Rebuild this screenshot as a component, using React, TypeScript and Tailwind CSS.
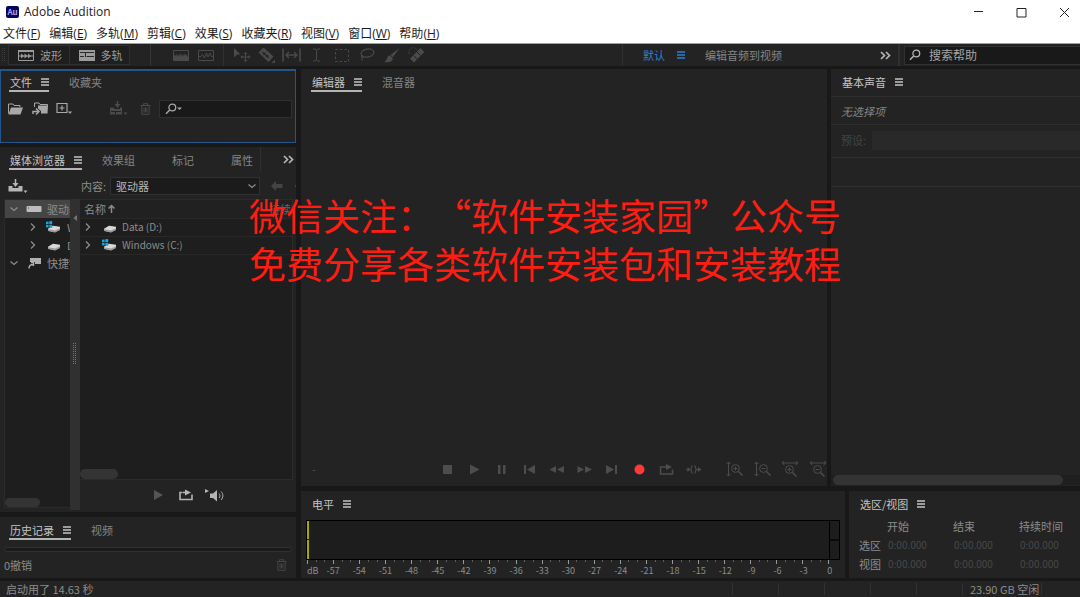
import React, { useState } from 'react';

type IconProps = { w: number; h: number; children: React.ReactNode; className?: string };

const Icon: React.FC<IconProps> = ({ w, h, children, className = '' }) => (
  <svg width={w} height={h} viewBox={`0 0 ${w} ${h}`} fill="none" className={`shrink-0 ${className}`} aria-hidden="true">
    {children}
  </svg>
);

const MenuLines = () => (
  <Icon w={8} h={8}>
    <path d="M0 1h8M0 4h8M0 7h8" stroke="currentColor" strokeWidth="1.3" />
  </Icon>
);

const DoubleChevron = () => (
  <Icon w={11} h={9}>
    <path d="M1 1l3.5 3.5L1 8M6 1l3.5 3.5L6 8" stroke="currentColor" strokeWidth="1.7" />
  </Icon>
);

const ChevronDown = () => (
  <Icon w={8} h={8}>
    <path d="M0.5 2.5l3.5 3 3.5-3" stroke="currentColor" strokeWidth="1.3" />
  </Icon>
);

const ChevronRight = () => (
  <Icon w={8} h={8}>
    <path d="M2 0.5l3.5 3.5L2 7.5" stroke="currentColor" strokeWidth="1.3" />
  </Icon>
);

const Trash = () => (
  <Icon w={11} h={12}>
    <path d="M0.5 2.5h10M3.5 2V0.7h4V2M1.8 2.5v8.8h7.4V2.5M4 4.5v5M5.5 4.5v5M7 4.5v5" stroke="currentColor" />
  </Icon>
);

const Loop = () => (
  <Icon w={14} h={12}>
    <path d="M3.5 3.5H1v7h12V5.5" stroke="currentColor" strokeWidth="1.6" />
    <path d="M4 3.5h4" stroke="currentColor" strokeWidth="1.6" />
    <path d="M6 0.5l6 3-6 3z" fill="currentColor" />
  </Icon>
);

const Search = () => (
  <Icon w={12} h={12}>
    <circle cx="7.3" cy="4.5" r="3.4" stroke="currentColor" strokeWidth="1.3" />
    <path d="M4.7 7L1 10.8" stroke="currentColor" strokeWidth="1.5" />
  </Icon>
);

const Disk: React.FC<{ windows?: boolean }> = ({ windows = false }) => (
  <Icon w={16} h={12}>
    <path d="M2 7.8L7 4.8l7 1v3L9 11.3l-7-1.5z" fill="#d9d9d9" />
    <path d="M2 8.3l7 1.2 5-2.2v1.8L9 11.5 2 10z" fill="#9a9a9a" />
    {windows && <path d="M0 0.8l2.6-.4v2.8H0zM3.3.3L6.2 0v3.2H3.3zM0 3.9h2.6v2.7L0 6.3zM3.3 3.9h2.9V7l-2.9-.4z" fill="#12a9e0" />}
  </Icon>
);

const DriveBox = () => (
  <Icon w={16} h={8}>
    <rect x="0.5" y="1" width="15" height="6" rx="1" fill="#bdbdbd" />
    <path d="M2 3h1" stroke="#444" />
  </Icon>
);

const Shortcut = () => (
  <Icon w={14} h={12}>
    <path d="M2 1h11v6H7V5H2z" fill="#b0b0b0" />
    <path d="M1 11.5c0-3 1-4 4-4M3 5.5h2.5V9" stroke="#b0b0b0" strokeWidth="1.4" />
  </Icon>
);

const Panel: React.FC<{ className?: string; label: string; children: React.ReactNode }> = ({ className = '', label, children }) => (
  <section aria-label={label} className={`flex flex-col overflow-hidden bg-[#232323] ${className}`}>
    {children}
  </section>
);

const PanelTabs: React.FC<{ tabs: string[]; plain?: boolean; children?: React.ReactNode }> = ({ tabs, plain = false, children }) => {
  const [active, setActive] = useState(tabs[0]);
  return (
    <div className="flex h-[23px] shrink-0 gap-5 pl-[9px]">
      {tabs.map((tab) => (
        <button
          key={tab}
          onClick={() => setActive(tab)}
          className={`flex shrink-0 items-center border-b-2 pt-[5px] leading-4 ${
            tab === active ? 'gap-[9px] pl-px text-[#c4c4c4]' : 'pr-[17px] text-[#858585]'
          } ${tab === active && !plain ? 'border-[#b4b4b4]' : 'border-transparent'}`}
        >
          {tab}
          {tab === active && <MenuLines />}
        </button>
      ))}
      {children}
    </div>
  );
};

const menus = [
  ['文件', 'F'],
  ['编辑', 'E'],
  ['多轨', 'M'],
  ['剪辑', 'C'],
  ['效果', 'S'],
  ['收藏夹', 'R'],
  ['视图', 'V'],
  ['窗口', 'W'],
  ['帮助', 'H'],
];

const TitleBar = () => (
  <header className="h-[44px] shrink-0 border-b border-[#9aa3a3] bg-white text-[#1c1c1c]">
    <div className="flex h-6 items-center">
      <div className="ml-[6px] flex h-3 w-[13px] items-center justify-center rounded-xs bg-[#05055c] text-[8px] font-bold leading-3 text-[#a5a5ff]">
        Au
      </div>
      <h1 className="ml-[5px] font-['Open_Sans','Noto_Sans_CJK_SC',sans-serif] text-[12px] leading-4">Adobe Audition</h1>
      <div className="ml-auto flex gap-8 pr-[10px]">
        <button aria-label="最小化">
          <Icon w={11} h={11}><path d="M1 4.5h9" stroke="#222" /></Icon>
        </button>
        <button aria-label="最大化">
          <Icon w={11} h={11}><path d="M1 1.5h9v8.5H1z" stroke="#222" /></Icon>
        </button>
        <button aria-label="关闭">
          <Icon w={11} h={11}><path d="M1 1l9 9M10 1l-9 9" stroke="#222" /></Icon>
        </button>
      </div>
    </div>
    <nav className="flex gap-[9px] pl-[3px] pt-[2px] font-['Open_Sans','Noto_Sans_CJK_SC',sans-serif] text-[12px] leading-4">
      {menus.map(([name, key]) => (
        <button key={key} className="whitespace-nowrap">
          {name}(<u>{key}</u>)
        </button>
      ))}
    </nav>
  </header>
);

const tools = [
  {
    name: '移动',
    icon: (
      <Icon w={18} h={14}>
        <path d="M1 0l6.5 6.5H4.2L1 9.5z" fill="currentColor" />
        <path d="M12.5 5v8M8.5 9h8" stroke="currentColor" />
        <path d="M12.5 4l2 2h-4zM12.5 14l2-2h-4zM7.5 9l2-2v4zM17.5 9l-2-2v4z" fill="currentColor" />
      </Icon>
    ),
  },
  {
    name: '切断',
    icon: (
      <Icon w={17} h={16}>
        <path d="M0.5 5.5L5.5 0.5l10 9-5 5.5z" fill="currentColor" />
        <path d="M4.5 5l6.5 6M7.5 5.5L5.5 8M10 8L8 10" stroke="#232323" strokeWidth="1.2" />
        <path d="M17 12.5V16h-3.5z" fill="currentColor" />
      </Icon>
    ),
  },
  {
    name: '滑动',
    icon: (
      <Icon w={19} h={14}>
        <path d="M1 0.5v13M18 0.5v13" stroke="currentColor" strokeWidth="1.6" />
        <path d="M4 7h11M7 4L4 7l3 3M12 4l3 3-3 3" stroke="currentColor" strokeWidth="1.4" />
      </Icon>
    ),
  },
  {
    name: '时间选择',
    icon: (
      <Icon w={9} h={14}>
        <path d="M1 1h2l1.5 1L6 1h2M4.5 2v10M1 13h2l1.5-1L6 13h2" stroke="currentColor" />
      </Icon>
    ),
  },
  {
    name: '框选',
    icon: (
      <Icon w={14} h={13}>
        <rect x="0.5" y="0.5" width="13" height="12" stroke="currentColor" strokeDasharray="2.5 2" />
      </Icon>
    ),
  },
  {
    name: '套索',
    icon: (
      <Icon w={16} h={14}>
        <ellipse cx="8.5" cy="5" rx="6.5" ry="4" stroke="currentColor" strokeWidth="1.2" transform="rotate(-12 8.5 5)" />
        <path d="M3.5 7.5c-2 1-1 3 .5 2.3s0-3-1-1.5 0 3 .5 4.500" stroke="currentColor" />
      </Icon>
    ),
  },
  {
    name: '画笔',
    icon: (
      <Icon w={16} h={15}>
        <path d="M15.5 0L6.5 7l2.300 2.300z" fill="currentColor" />
        <path d="M6 7.500c-3.500 0-2 4.500-6 6.500 4 1 9 0 8.800-4z" fill="currentColor" />
      </Icon>
    ),
  },
  {
    name: '修复',
    icon: (
      <Icon w={17} h={16}>
        <path d="M4 13.500L14.500 3" stroke="currentColor" strokeWidth="5.500" />
        <path d="M5.500 8.500l3.500 3.500M9 5l3.500 3.500" stroke="#232323" />
        <path d="M1 6.500C0 3 2.500 0.500 5.500 0.800 7.500 1 8.500 2 9 3" stroke="currentColor" strokeDasharray="1.500 1.500" />
      </Icon>
    ),
  },
];

const Toolbar = () => (
  <div className="flex h-[22px] shrink-0 items-center overflow-hidden bg-[#232323] text-[#9b9b9b]">
    <Icon w={8} h={14} className="text-[#3c3c3c]">
      <path d="M2.500 0v14M4.500 0v14" stroke="currentColor" strokeDasharray="1 1" />
    </Icon>
    <div className="flex h-5 w-[122px] divide-x divide-[#303030] border border-[#303030] bg-[#1f1f1f]">
      <button className="flex flex-1 items-center gap-[6px] pl-[9px] leading-4">
        <Icon w={16} h={11}>
          <path d="M0.500 0.500h15v10H0.500z" stroke="currentColor" />
          <path d="M0 1h16" stroke="currentColor" strokeWidth="2" />
          <path d="M1 6h14" stroke="currentColor" />
          <path d="M3 3.500L6 6 3 8.500zM6.500 3.500l3 2.500-3 2.500zM10 3.500L13 6l-3 2.500z" fill="currentColor" />
        </Icon>
        波形
      </button>
      <button className="flex flex-1 items-center gap-[6px] pl-[9px] leading-4">
        <Icon w={16} h={11}>
          <path d="M0 0h16v11H0z" fill="currentColor" />
          <path d="M1 2.500h14M7.500 6.500H15M1 6.500h4M6.500 3v4" stroke="#2a2a2a" />
        </Icon>
        多轨
      </button>
    </div>
    <span className="ml-5 h-full w-px bg-[#363636]" />
    <div className="ml-[17px] flex w-[50px] text-[#4a4a4a]">
      <button aria-label="频谱频率" className="flex w-[25px] justify-center">
        <Icon w={16} h={11}>
          <path d="M0.500 0.500h15v10H0.500z" stroke="currentColor" />
          <path d="M1 10V6l1-2 1 3 1-4 1 4 1-3 1 2 1-3 1 4 1-3 1 2 1-3 1 3 1-2 1 4v2z" fill="currentColor" />
        </Icon>
      </button>
      <button aria-label="频谱音调" className="flex w-[25px] justify-center">
        <Icon w={16} h={11}>
          <path d="M0.500 0.500h15v10H0.500z" stroke="currentColor" />
          <path d="M1 6.500h2l1.500-2 2 3.500 2-5 1.500 4 2-4 1.500 3.500H15" stroke="currentColor" />
        </Icon>
      </button>
    </div>
    <span className="ml-[5px] mr-[5px] h-full w-px bg-[#303030]" />
    <div className="flex text-[#4a4a4a]">
      {tools.map((tool) => (
        <button key={tool.name} aria-label={tool.name} className="flex w-[25px] items-center justify-center">
          {tool.icon}
        </button>
      ))}
    </div>
    <div className="ml-auto flex h-full w-[458px] items-center border-l border-[#303030]">
      <button className="ml-5 flex items-center gap-3 leading-4 text-[#2f7fd0]">
        默认
        <MenuLines />
      </button>
      <button className="ml-5 leading-4 text-[#858585]">编辑音频到视频</button>
      <button aria-label="更多工作区" className="ml-auto mr-[6px] text-[#b5b5b5]">
        <DoubleChevron />
      </button>
      <label className="ml-px flex h-full w-[182px] items-center border-l-2 border-[#303030] pl-1">
        <span className="flex h-[19px] w-full items-center gap-2 border border-r-0 border-[#303030] bg-[#191919] pl-1 text-[#b5b5b5]">
          <Search />
          <input aria-label="搜索帮助" placeholder="搜索帮助" className="w-full bg-transparent text-[12px] leading-4 outline-none placeholder:text-[#a5a5a5]" />
        </span>
      </label>
    </div>
  </div>
);

const FilesPanel = () => (
  <Panel label="文件" className="h-[74px] shrink-0 border border-t-2 border-[#24558c]">
    <div className="-mt-[2px] -ml-px">
      <PanelTabs tabs={['文件', '收藏夹']} />
    </div>
    <div className="mt-[7px] flex h-[19px] items-center pl-[7px] pr-[3px] text-[#a8a8a8]">
      <button aria-label="打开文件">
        <Icon w={15} h={12}>
          <path d="M0.500 10.500V1h4.500l1 1.500h6V4" stroke="currentColor" />
          <path d="M3 4.500h12l-2.500 7H0.500z" fill="currentColor" />
        </Icon>
      </button>
      <button aria-label="导入文件" className="ml-[9px]">
        <Icon w={16} h={13}>
          <path d="M2.500 5V1H7l1 1.500h7.500V4" stroke="currentColor" />
          <path d="M6 3.500h10l-.5 8H9V9L6 6.500z" fill="currentColor" />
          <path d="M1 12V9.500h5M4 6.500l3 3-3 3" stroke="currentColor" strokeWidth="1.500" />
        </Icon>
      </button>
      <button aria-label="新建文件" className="ml-[8px]">
        <Icon w={17} h={13}>
          <path d="M1 1.500h10v9H1zM6 3.500v5M3.500 6h5" stroke="currentColor" strokeWidth="1.200" />
          <path d="M12 9.500h4l-2 2.500z" fill="currentColor" />
        </Icon>
      </button>
      <button aria-label="插入到多轨混音中" className="ml-9 text-[#4a4a4a]">
        <Icon w={19} h={15}>
          <path d="M1 6.500h4V8h6V6.500h2v7H1z" fill="currentColor" />
          <path d="M2 10.500h10M6.500 10v3" stroke="#232323" />
          <path d="M8.500 0v4" stroke="currentColor" strokeWidth="1.500" />
          <path d="M5.500 3h6l-3 4z" fill="currentColor" />
          <path d="M14.500 11.500h4l-2 2.500z" fill="currentColor" />
        </Icon>
      </button>
      <button aria-label="删除" className="ml-3 text-[#4a4a4a]">
        <Trash />
      </button>
      <label className="ml-2 flex h-[18px] flex-1 items-center border border-[#303030] bg-[#191919] pl-[5px]">
        <Search />
        <Icon w={5} h={4}><path d="M0 0.500h5L2.500 3z" fill="currentColor" /></Icon>
        <input aria-label="筛选文件" className="w-full bg-transparent leading-4 outline-none" />
      </label>
    </div>
  </Panel>
);

const drives = [
  { name: 'Data (D:)', windows: false },
  { name: 'Windows (C:)', windows: true },
];

const MediaBrowser = () => (
  <Panel label="媒体浏览器" className="min-h-0 flex-1">
    <PanelTabs tabs={['媒体浏览器', '效果组', '标记', '属性']}>
      <button aria-label="更多面板" className="-ml-[30px] flex h-6 shrink-0 items-center border-l border-[#303030] pl-[22px] text-[#b5b5b5]">
        <DoubleChevron />
      </button>
    </PanelTabs>
    <div className="mt-[6px] flex h-5 shrink-0 items-center overflow-hidden pl-2 text-[#8c8c8c]">
      <button aria-label="导入" className="text-[#b5b5b5]">
        <Icon w={20} h={14}>
          <path d="M0.500 7h4v2h6V7h4v5.500H0.500z" fill="currentColor" />
          <path d="M7.500 0v5" stroke="currentColor" strokeWidth="1.500" />
          <path d="M4.500 4h6l-3 4z" fill="currentColor" />
          <path d="M15.500 11.500h4l-2 2.500z" fill="currentColor" />
        </Icon>
      </button>
      <label htmlFor="content" className="ml-[53px] whitespace-nowrap leading-4">内容:</label>
      <div className="relative ml-[4px] w-[150px] shrink-0">
        <select id="content" className="h-[18px] w-full appearance-none border border-[#303030] bg-[#1b1b1b] pl-[5px] leading-4 text-[#b5b5b5]">
          <option>驱动器</option>
        </select>
        <span className="pointer-events-none absolute right-1 top-[5px]"><ChevronDown /></span>
      </div>
      <button aria-label="后退" className="ml-[11px] shrink-0 text-[#444]">
        <Icon w={12} h={10}><path d="M0 5l5-5v3h6.500v4H5v3z" fill="currentColor" /></Icon>
      </button>
      <Icon w={4} h={4} className="ml-3 text-[#444]"><path d="M0 1h2v2H0z" fill="currentColor" /></Icon>
    </div>
    <div className="mt-[3px] flex min-h-0 flex-1 pb-[2px] pl-1 pr-[3px] text-[#8c8c8c]">
      <div className="mb-[2px] flex w-[66px] flex-col overflow-hidden border border-r-0 border-[#2b2b2b] bg-[#1e1e1e]">
        <ul className="whitespace-nowrap">
          <li className="flex h-[18px] items-center bg-[#454545] pl-[5px]">
            <ChevronDown />
            <span className="ml-2"><DriveBox /></span>
            <span className="ml-[5px] leading-4">驱动器</span>
          </li>
          {['Windows (C:)', 'Data (D:)'].map((name) => (
            <li key={name} className="flex h-[18px] items-center pl-6">
              <ChevronRight />
              <span className="ml-[9px]"><Disk windows={name.startsWith('W')} /></span>
              <span className="ml-[5px] leading-4">{name}</span>
            </li>
          ))}
          <li className="flex h-[18px] items-center pl-[5px]">
            <ChevronDown />
            <span className="ml-[10px]"><Shortcut /></span>
            <span className="ml-[5px] leading-4">快捷键</span>
          </li>
        </ul>
        <div className="mt-auto h-[9px] w-[35px] rounded-full bg-[#343434]" />
      </div>
      <div className="flex w-[10px] flex-col items-center bg-[#303030] text-[#777]">
        <Icon w={4} h={6} className="mt-4"><path d="M4 0v6L0.500 3z" fill="currentColor" /></Icon>
        <Icon w={4} h={22} className="mt-[122px]">
          <path d="M0.500 0v22M2.500 0v22" stroke="currentColor" strokeDasharray="1 1" />
        </Icon>
      </div>
      <div className="flex min-w-0 flex-1 flex-col">
        <div className="flex min-h-0 flex-1 flex-col border-b border-r border-t border-[#2b2b2b] bg-[#1e1e1e]">
          <table className="w-full table-fixed border-collapse">
            <thead>
              <tr className="h-[18px] border-b border-[#282828] bg-[#212121] text-left leading-4">
                <th className="p-0 pl-1 font-normal">
                  <span className="flex items-center gap-px">
                    名称
                    <Icon w={9} h={9}><path d="M4.500 9V1.500M1.500 4.500l3-3 3 3" stroke="currentColor" strokeWidth="1.500" /></Icon>
                  </span>
                </th>
                <th className="w-[23px] overflow-hidden whitespace-nowrap p-0 font-normal text-[#666]">持续时间</th>
              </tr>
            </thead>
            <tbody>
              {drives.map((drive) => (
                <tr key={drive.name} className="h-[18px] border-b border-[#282828]">
                  <td className="p-0 pl-1" colSpan={2}>
                    <span className="flex items-center leading-4">
                      <ChevronRight />
                      <span className="ml-[10px]"><Disk windows={drive.windows} /></span>
                      <span className="ml-1 text-[10px]">{drive.name}</span>
                    </span>
                  </td>
                </tr>
              ))}
            </tbody>
          </table>
          <div className="mt-auto h-[10px] w-[38px] rounded-full bg-[#343434]" />
        </div>
        <div className="flex h-[30px] shrink-0 items-center gap-4 pl-[74px] text-[#b5b5b5]">
          <button aria-label="播放预览" className="text-[#555]">
            <Icon w={9} h={10}><path d="M0 0l9 5-9 5z" fill="currentColor" /></Icon>
          </button>
          <button aria-label="循环"><Loop /></button>
          <button aria-label="自动播放" className="-ml-1">
            <Icon w={20} h={13}>
              <path d="M0 0l4 2-4 2zM5 4.500h3L12 1v11.500L8 9H5z" fill="currentColor" />
              <path d="M14 4.500c1.300 1.300 1.300 3.200 0 4.500M16 2.500c2.500 2.500 2.500 6 0 8.500" stroke="currentColor" />
            </Icon>
          </button>
        </div>
      </div>
    </div>
  </Panel>
);

const HistoryPanel = () => (
  <Panel label="历史记录" className="h-[61px] shrink-0">
    <PanelTabs tabs={['历史记录', '视频']} />
    <div className="ml-1 mr-1 mt-[7px] h-[5px] rounded-xs border border-[#303030] bg-[#1b1b1b]" />
    <div className="flex flex-1 items-center justify-between pl-1 pr-[9px] text-[#8c8c8c]">
      <span className="leading-4">0撤销</span>
      <button aria-label="删除历史" className="text-[#444]"><Trash /></button>
    </div>
  </Panel>
);

const transport = [
  { name: '停止', icon: <path d="M2 2h9v9H2z" fill="currentColor" /> },
  { name: '播放', icon: <path d="M2 1.500l9.500 5L2 11.500z" fill="currentColor" /> },
  { name: '暂停', icon: <path d="M3 2h2.500v9H3zM8 2h2.500v9H8z" fill="currentColor" /> },
  { name: '移到上一个', icon: <path d="M1 2h2v9H1zM12 2v9L4 6.500z" fill="currentColor" /> },
  { name: '快退', icon: <path d="M6 3v7L-0.500 6.500zM14 3v7L7 6.500z" fill="currentColor" /> },
  { name: '快进', icon: <path d="M-0.500 3v7L6 6.500zM7 3v7l7-3.500z" fill="currentColor" /> },
  { name: '移到下一个', icon: <path d="M1 2v9l8-4.500zM10 2h2v9h-2z" fill="currentColor" /> },
  { name: '录制', icon: <circle cx="6.500" cy="6.500" r="5" fill="#fb3a3a" /> },
  {
    name: '循环播放',
    icon: (
      <>
        <path d="M3 4H0.500v7h12V6.500M3 4h5" stroke="currentColor" strokeWidth="1.500" />
        <path d="M6 1l6 3-6 3z" fill="currentColor" />
      </>
    ),
  },
  {
    name: '跳过所选项目',
    icon: (
      <>
        <path d="M-1 6.500h4M9 6.500h4M5.500 2.500C4 3 5 6 3.500 6.500 5 7 4 10 5.500 10.500M7.500 2.500C9 3 8 6 9.500 6.500 8 7 9 10 7.500 10.500" stroke="currentColor" strokeWidth="1.200" />
        <path d="M0.500 4v5l3-2.500zM11 4v5l3.500-2.500z" fill="currentColor" />
      </>
    ),
  },
];

const zooms = [
  { name: '放大振幅', vertical: true, plus: true },
  { name: '缩小振幅', vertical: true, plus: false },
  { name: '放大时间', vertical: false, plus: true },
  { name: '缩小时间', vertical: false, plus: false },
];

const Editor = () => (
  <Panel label="编辑器" className="min-w-0 flex-1 pl-px">
    <PanelTabs tabs={['编辑器', '混音器']} />
    <div className="flex-1" />
    <div className="flex h-[34px] shrink-0 items-center text-[#4d4d4d]">
      <span className="ml-[10px] leading-4">-</span>
      <div className="ml-auto flex w-[267px] justify-between">
        {transport.map((item) => (
          <button key={item.name} aria-label={item.name} className="flex w-5 justify-center">
            <svg width="13" height="13" viewBox="0 0 13 13" fill="none" className="overflow-visible" aria-hidden="true">
              {item.icon}
            </svg>
          </button>
        ))}
      </div>
      <div className="ml-[22px] flex w-[101px] justify-between">
        {zooms.map((zoom) => (
          <button key={zoom.name} aria-label={zoom.name} className="flex w-[18px] justify-center">
            <Icon w={18} h={16}>
              {zoom.vertical ? (
                <path d="M2.500 1v14M0.500 3l2-2 2 2M0.500 13l2 2 2-2" stroke="currentColor" />
              ) : (
                <path d="M1 2h16M3.500 0L1 2l2.500 2M14.500 0L17 2l-2.500 2" stroke="currentColor" />
              )}
              <g transform={zoom.vertical ? 'translate(5 3)' : 'translate(4 4)'}>
                <circle cx="4.500" cy="4.500" r="3.900" stroke="currentColor" />
                <path d="M7.500 7.500l4 4" stroke="currentColor" strokeWidth="1.500" />
                <path d="M2.500 4.500h4" stroke="currentColor" />
                {zoom.plus && <path d="M4.500 2.500v4" stroke="currentColor" />}
              </g>
            </Icon>
          </button>
        ))}
      </div>
    </div>
  </Panel>
);

const EssentialSound = () => (
  <Panel label="基本声音" className="w-[249px] shrink-0">
    <div className="h-[28px] shrink-0 border-b border-[#2e2e2e] pl-px">
      <PanelTabs tabs={['基本声音']} plain />
    </div>
    <p className="h-[28px] shrink-0 border-b border-[#2e2e2e] pl-[10px] pt-[6px] italic leading-4 text-[#858585]">无选择项</p>
    <div className="flex h-[33px] shrink-0 items-center gap-[6px] border-b border-[#2e2e2e] pb-[2px] pl-[10px] text-[#444]">
      <label htmlFor="preset" className="whitespace-nowrap leading-4">预设:</label>
      <select id="preset" disabled className="h-[19px] min-w-0 flex-1 appearance-none bg-[#292929]" />
    </div>
    <div className="h-[29px] shrink-0 border-b border-[#2e2e2e]" />
    <div className="mt-auto mb-px h-[10px] bg-[#1f1f1f] pl-[2px] pr-[17px]">
      <div className="h-full rounded-full bg-[#343434]" />
    </div>
  </Panel>
);

const levels = Array.from({ length: 21 }, (_, i) => i * 3 - 60);
const ticks = Array.from({ length: 61 }, (_, i) => i);

const Levels = () => (
  <Panel label="电平" className="min-w-0 flex-1">
    <div className="pl-px">
      <PanelTabs tabs={['电平']} plain />
    </div>
    <div className="ml-[5px] mr-[5px] mt-[6px] flex h-10 shrink-0 border border-black bg-[#1d1d1d]">
      <div className="w-[2px] divide-y divide-[#1d1d1d] bg-[#a5a50c]">
        <div className="h-[19px]" />
        <div className="h-[19px]" />
      </div>
      <div className="flex-1" />
      <div className="w-[10px] border-l border-black">
        <div className="h-5 border-b-2 border-[#0a0a0a]" />
      </div>
    </div>
    <div className="ml-[6px] mr-[15px] flex justify-between text-[#8c8c8c]">
      {ticks.map((tick) => (
        <span key={tick} className={tick % 3 === 0 ? 'h-1 w-px bg-[#999]' : 'h-[2px] w-px bg-[#606060]'} />
      ))}
    </div>
    <div className="ml-[6px] mr-[15px] flex justify-between pt-px text-[9px] leading-3 text-[#8c8c8c]">
      {levels.map((level) => (
        <span key={level} className={level === -60 ? 'w-0' : 'flex w-0 justify-center'}>
          {level === -60 ? 'dB' : level}
        </span>
      ))}
    </div>
  </Panel>
);

const SelectionView = () => (
  <Panel label="选区/视图" className="w-[231px] shrink-0">
    <div className="pl-px">
      <PanelTabs tabs={['选区/视图']} plain />
    </div>
    <table className="ml-[10px] mt-[2px] w-[221px] table-fixed text-left leading-4 text-[#8c8c8c]">
      <colgroup>
        <col className="w-[28px]" />
        <col className="w-[66px]" />
        <col className="w-[66px]" />
        <col />
      </colgroup>
      <thead>
        <tr className="h-[19px]">
          <td className="p-0" />
          {['开始', '结束', '持续时间'].map((title) => (
            <th key={title} className="whitespace-nowrap p-0 font-normal">{title}</th>
          ))}
        </tr>
      </thead>
      <tbody>
        {['选区', '视图'].map((row) => (
          <tr key={row} className="h-[19px]">
            <th className="p-0 font-normal">{row}</th>
            {[0, 1, 2].map((col) => (
              <td key={col} className="p-0 pl-px text-[10px] text-[#484848]">0:00.000</td>
            ))}
          </tr>
        ))}
      </tbody>
    </table>
  </Panel>
);

const StatusBar = () => (
  <footer className="flex h-4 shrink-0 items-center bg-[#232323] leading-4 text-[#8c8c8c]">
    <span className="pl-[6px]">启动用了 14.63 秒</span>
    <div className="ml-auto flex h-3">
      {[0, 1, 2, 3, 4].map((i) => (
        <span key={i} className="w-[46px] border-l border-[#323232]" />
      ))}
    </div>
    <div className="flex h-3 w-20 items-center border-l border-r border-[#323232] pl-[7px]">
      <span className="whitespace-nowrap">23.90 GB 空闲</span>
    </div>
    <div className="w-[38px]" />
  </footer>
);

const App: React.FC = () => (
  <div lang="zh-CN" className="relative flex h-screen flex-col overflow-hidden bg-[#181818] font-['Noto_Sans_CJK_SC',sans-serif] text-[11px]">
    <TitleBar />
    <Toolbar />
    <main className="flex min-h-0 flex-1 gap-[5px] py-[3px]">
      <div className="flex w-[296px] shrink-0 flex-col">
        <FilesPanel />
        <div className="mt-1 flex min-h-0 flex-1 flex-col gap-[5px]">
          <MediaBrowser />
          <HistoryPanel />
        </div>
      </div>
      <div className="flex min-w-0 flex-1 flex-col gap-[5px]">
        <div className="flex min-h-0 flex-1 gap-1">
          <Editor />
          <EssentialSound />
        </div>
        <div className="flex h-[87px] shrink-0 gap-1">
          <Levels />
          <SelectionView />
        </div>
      </div>
    </main>
    <StatusBar />
    <p className="pointer-events-none absolute left-[249px] top-[191px] whitespace-nowrap text-[37px] leading-[48px] text-[#ff1d12] [text-spacing-trim:space-all]">
      微信关注：“软件安装家园”公众号
      <br />
      免费分享各类软件安装包和安装教程
    </p>
  </div>
);

export default App;
